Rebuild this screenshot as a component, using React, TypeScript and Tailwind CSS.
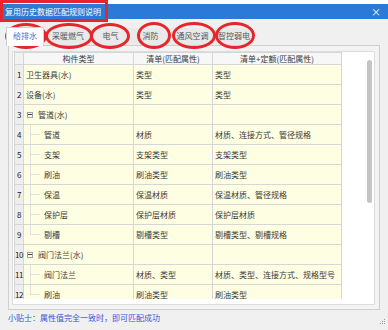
import React from 'react';

type Row = {
  n: number;
  a: string;
  b: string;
  c: string;
  kind: 'top' | 'group' | 'child' | 'last';
};

const rows: Row[] = [
  { n: 1, a: '卫生器具(水)', b: '类型', c: '类型', kind: 'top' },
  { n: 2, a: '设备(水)', b: '类型', c: '类型', kind: 'top' },
  { n: 3, a: '管道(水)', b: '', c: '', kind: 'group' },
  { n: 4, a: '管道', b: '材质', c: '材质、连接方式、管径规格', kind: 'child' },
  { n: 5, a: '支架', b: '支架类型', c: '支架类型', kind: 'child' },
  { n: 6, a: '刷油', b: '刷油类型', c: '刷油类型', kind: 'child' },
  { n: 7, a: '保温', b: '保温材质', c: '保温材质、管径规格', kind: 'child' },
  { n: 8, a: '保护层', b: '保护层材质', c: '保护层材质', kind: 'child' },
  { n: 9, a: '剔槽', b: '剔槽类型', c: '剔槽类型、剔槽规格', kind: 'last' },
  { n: 10, a: '阀门法兰(水)', b: '', c: '', kind: 'group' },
  { n: 11, a: '阀门法兰', b: '材质、类型', c: '材质、类型、连接方式、规格型号', kind: 'child' },
  { n: 12, a: '刷油', b: '刷油类型', c: '刷油类型', kind: 'last' },
];

const tabs = [
  { label: '给排水', w: 'w-[38px]', ml: 'ml-[6px]', active: true },
  { label: '采暖燃气', w: 'w-[44px]', ml: 'ml-[2px]', active: false },
  { label: '电气', w: 'w-[39px]', ml: 'ml-[1px]', active: false },
  { label: '消防', w: 'w-[39px]', ml: 'ml-[1px]', active: false },
  { label: '通风空调', w: 'w-[43px]', ml: 'ml-[1px]', active: false },
  { label: '智控弱电', w: 'w-[38px]', ml: 'ml-[1px]', active: false },
];

// red annotation rings drawn over the tabs
const rings = [
  'left-[5px] top-[23px] w-[42px] h-[26px]',
  'left-[45px] top-[23px] w-[48px] h-[26px]',
  'left-[90px] top-[23px] w-[40px] h-[26px]',
  'left-[137px] top-[22px] w-[34px] h-[27px]',
  'left-[172px] top-[22px] w-[44px] h-[27px]',
  'left-[215px] top-[22px] w-[40px] h-[27px]',
];

const line = 'border-[#d6d6d6]';
const tree = 'border-[#e0e0e0]';

function NameCell({ row }: { row: Row }) {
  if (row.kind === 'top') {
    return <span className="pl-[2px]">{row.a}</span>;
  }
  if (row.kind === 'group') {
    return (
      <div className="flex items-center h-full">
        <div className="ml-[3px] w-[6px] h-[6px] border border-[#a0a0a0] bg-white flex items-center justify-center">
          <div className="w-[4px] h-px bg-[#444]" />
        </div>
        <span className="ml-[5px]">{row.a}</span>
      </div>
    );
  }
  return (
    <div className="flex items-center h-full">
      <div className="ml-[6px] w-[10px] self-stretch flex flex-col">
        <div className={`flex-1 border-l border-b ${tree}`} />
        <div className={`flex-1 ${row.kind === 'last' ? '' : `border-l ${tree}`}`} />
      </div>
      <span className="ml-[4px]">{row.a}</span>
    </div>
  );
}

export default function App() {
  return (
    <div
      className="relative w-[388px] h-[330px] overflow-hidden bg-[#f0f0f0] text-[8px] leading-none text-[#3a3a3a]"
      style={{ fontFamily: '"Noto Sans CJK SC", "Noto Sans", sans-serif' }}
    >
      <div className="h-[4px] bg-white" />
      <div className="h-[15px] bg-[#2b7ad6] flex items-center justify-between pl-[5px] pr-[7px] text-white">
        <span>复用历史数据匹配规则说明</span>
        <span className="text-[10px]">×</span>
      </div>

      {/* tabs */}
      <div className="flex items-end h-[26px]">
        {tabs.map((t) => (
          <div
            key={t.label}
            className={`${t.w} ${t.ml} flex items-center justify-center ${
              t.active
                ? 'bg-white border border-b-0 border-[#cfcfcf] text-[#2f6fd8] relative z-10 -mb-px h-[19px] pb-[2px]'
                : 'bg-[#e9e9e9] text-[#555] h-[17px] pb-[1px]'
            }`}
          >
            {t.label}
          </div>
        ))}
      </div>

      {/* content panel */}
      <div className="ml-[8px] w-[372px] h-[265px] border border-[#cfcfcf] bg-[#f3f3f3]">
        <div className="ml-[3px] mt-[5px] w-[363px] h-[254px] border border-[#dcdcdc] bg-white flex">
          <div className="ml-px h-[247px] overflow-hidden">
            <div className={`grid grid-cols-[9px_110px_79px_129px] border-l border-t ${line}`}>
              <div className={`h-[12px] bg-[#f2f2f2] border-r border-b ${line}`} />
              <div className={`h-[12px] bg-[#f7f7f7] border-r border-b ${line} flex items-center justify-center`}>构件类型</div>
              <div className={`h-[12px] bg-[#f7f7f7] border-r border-b ${line} flex items-center justify-center`}>清单(匹配属性)</div>
              <div className={`h-[12px] bg-[#f7f7f7] border-r border-b ${line} flex items-center justify-center`}>清单+定额(匹配属性)</div>
              {rows.map((r) => (
                <React.Fragment key={r.n}>
                  <div className={`h-[20px] bg-[#eeeeee] border-r border-b ${line} flex items-center justify-center text-[#222] tracking-[-0.5px]`}>
                    {r.n}
                  </div>
                  <div className={`h-[20px] bg-[#fefee3] border-r border-b ${line} flex items-center`}>
                    <NameCell row={r} />
                  </div>
                  <div className={`h-[20px] bg-[#fefee3] border-r border-b ${line} flex items-center pl-[2px]`}>{r.b}</div>
                  <div className={`h-[20px] bg-[#fefee3] border-r border-b ${line} flex items-center pl-[2px]`}>{r.c}</div>
                </React.Fragment>
              ))}
            </div>
          </div>
          <div className="ml-auto w-[10px] flex justify-center">
            <div className="mt-[8px] w-[5px] h-[143px] rounded-[3px] bg-[#c4c4c4]" />
          </div>
        </div>
      </div>

      {/* footer */}
      <div className="flex items-center h-[14px] mt-[1px] pl-[8px] pr-[2px]">
        <span className="text-[#3258d6]">小贴士：属性值完全一致时，即可匹配成功</span>
        <svg className="ml-auto mt-[8px]" width="6" height="6" viewBox="0 0 6 6">
          <rect x="4" y="0" width="1" height="1" fill="#999" />
          <rect x="2" y="2" width="1" height="1" fill="#999" />
          <rect x="4" y="2" width="1" height="1" fill="#999" />
          <rect x="0" y="4" width="1" height="1" fill="#999" />
          <rect x="2" y="4" width="1" height="1" fill="#999" />
          <rect x="4" y="4" width="1" height="1" fill="#999" />
        </svg>
      </div>

      {/* red annotations */}
      <div className="absolute left-0 top-0 w-[108px] h-[22px] border-[3px] border-[#e5262a]" />
      {rings.map((r) => (
        <div key={r} className={`absolute ${r} rounded-[50%] border-[3px] border-[#e5262a]`} />
      ))}
    </div>
  );
}
